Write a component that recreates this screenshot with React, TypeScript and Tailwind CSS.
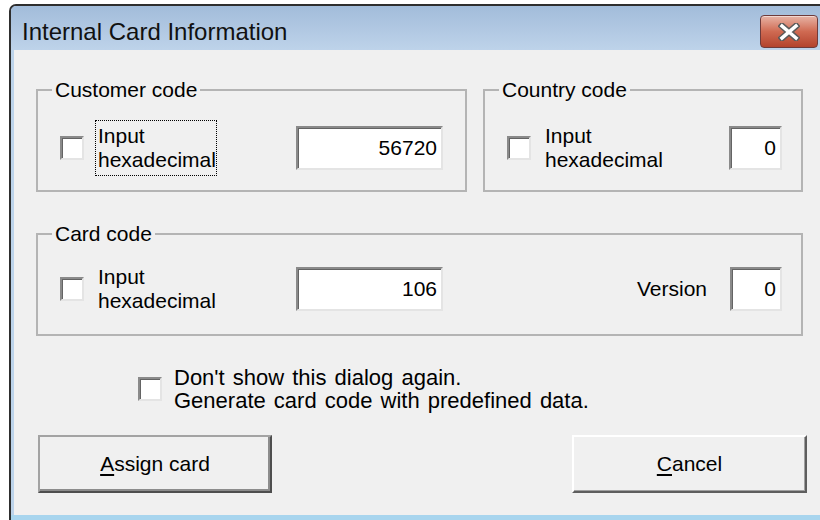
import type { ReactNode } from "react";

const sunken =
    "bg-white border-2 border-t-[#8a8a8a] border-l-[#8a8a8a] border-r-[#e4e4e4] border-b-[#e4e4e4] shadow-[inset_1px_1px_0_#646464]";

function CheckBox() {
    return <span className={`block w-[24px] h-[24px] shrink-0 ${sunken}`} />;
}

function Field({ value, className = "" }: { value: string; className?: string }) {
    return (
        <input
            readOnly
            defaultValue={value}
            className={`h-[44px] shrink-0 text-right pr-[4px] outline-none ${sunken} ${className}`}
        />
    );
}

function HexLabel({ focused = false }: { focused?: boolean }) {
    return (
        <span
            className={`ml-[11px] w-[122px] px-[2px] py-[3px] leading-[24px] border border-dotted ${
                focused ? "border-black" : "border-transparent"
            }`}
        >
            Input
            <br />
            hexadecimal
        </span>
    );
}

function Group({ title, className = "", children }: { title: string; className?: string; children: ReactNode }) {
    return (
        <fieldset className={`shrink-0 border-2 border-[#b4b4b4] ${className}`}>
            <legend className="ml-[14px] px-[3px] leading-[23px]">{title}</legend>
            {children}
        </fieldset>
    );
}

function Button({ hot, rest, isDefault = false, className = "" }: { hot: string; rest: string; isDefault?: boolean; className?: string }) {
    const edge = isDefault
        ? "border-2 border-t-[#a3a3a3] border-l-[#a3a3a3] border-r-[#4e4e4e] border-b-[#4e4e4e] shadow-[inset_-2px_-2px_0_#8c8c8c]"
        : "border-2 border-t-white border-l-white border-r-[#5e5e5e] border-b-[#5e5e5e] shadow-[inset_-1px_-1px_0_#a0a0a0]";
    return (
        <button type="button" className={`h-[58px] bg-[#f0f0f0] flex items-center justify-center ${edge} ${className}`}>
            <span>
                <u className="underline-offset-[3px]">{hot}</u>
                {rest}
            </span>
        </button>
    );
}

function CloseButton() {
    return (
        <div className="w-[58px] h-[33px] mr-[2px] mt-[9px] rounded-[4px] border border-[#6e3b3b] bg-gradient-to-b from-[#e6b3a6] via-[#cf6a52] to-[#b3432d] flex items-center justify-center shadow-[inset_0_1px_0_rgba(255,255,255,0.5)]">
            <svg width="22" height="18" viewBox="0 0 22 18">
                <path d="M4 3 L18 15 M18 3 L4 15" stroke="#5a5a5a" strokeWidth="6.5" strokeLinecap="square" />
                <path d="M4 3 L18 15 M18 3 L4 15" stroke="#ffffff" strokeWidth="3.5" strokeLinecap="square" />
            </svg>
        </div>
    );
}

export default function App() {
    return (
        <div className="w-[820px] h-[520px] bg-white overflow-hidden text-black font-['Liberation_Sans',Arial,sans-serif]">
            <div className="ml-[9px] mt-[4px] w-[811px] h-[516px] flex flex-col border-l-2 border-t-2 border-[#2e2e2e] rounded-tl-[7px] bg-[#bcd3ea] overflow-hidden">
                {/* title bar */}
                <div className="h-[44px] shrink-0 flex items-start justify-between bg-gradient-to-b from-[#a2bcda] to-[#bed3ea]">
                    <span className="ml-[11px] mt-[12px] text-[24px] leading-[28px] text-[#111]">Internal Card Information</span>
                    <CloseButton />
                </div>

                {/* client area */}
                <div className="ml-[3px] h-[465px] shrink-0 bg-[#f0f0f0] text-[21px] flex flex-col pt-[28px]">
                    <div className="flex gap-[16px] ml-[22px]">
                        <Group title="Customer code" className="w-[431px] h-[114px]">
                            <div className="mt-[22px] h-[50px] flex items-center pl-[22px]">
                                <CheckBox />
                                <HexLabel focused />
                                <Field value="56720" className="ml-[79px] w-[147px]" />
                            </div>
                        </Group>
                        <Group title="Country code" className="w-[320px] h-[114px]">
                            <div className="mt-[22px] h-[50px] flex items-center pl-[22px] pr-[19px]">
                                <CheckBox />
                                <HexLabel />
                                <Field value="0" className="ml-auto w-[53px]" />
                            </div>
                        </Group>
                    </div>

                    <Group title="Card code" className="ml-[22px] mt-[30px] w-[767px] h-[114px]">
                        <div className="mt-[19px] h-[50px] flex items-center pl-[22px] pr-[19px]">
                            <CheckBox />
                            <HexLabel />
                            <Field value="106" className="ml-[79px] w-[147px]" />
                            <span className="ml-auto mr-[23px]">Version</span>
                            <Field value="0" className="w-[52px]" />
                        </div>
                    </Group>

                    <label className="mt-[30px] ml-[124px] flex items-center gap-[12px]">
                        <CheckBox />
                        <span className="text-[22px] leading-[23px] [word-spacing:2px]">
                            Don't show this dialog again.
                            <br />
                            Generate card code with predefined data.
                        </span>
                    </label>

                    <div className="mt-[23px] flex ml-[24px]">
                        <Button hot="A" rest="ssign card" isDefault className="w-[234px]" />
                        <Button hot="C" rest="ancel" className="ml-[300px] w-[235px]" />
                    </div>
                </div>

                <div className="flex-1 bg-[#a8d5ee]" />
            </div>
        </div>
    );
}
